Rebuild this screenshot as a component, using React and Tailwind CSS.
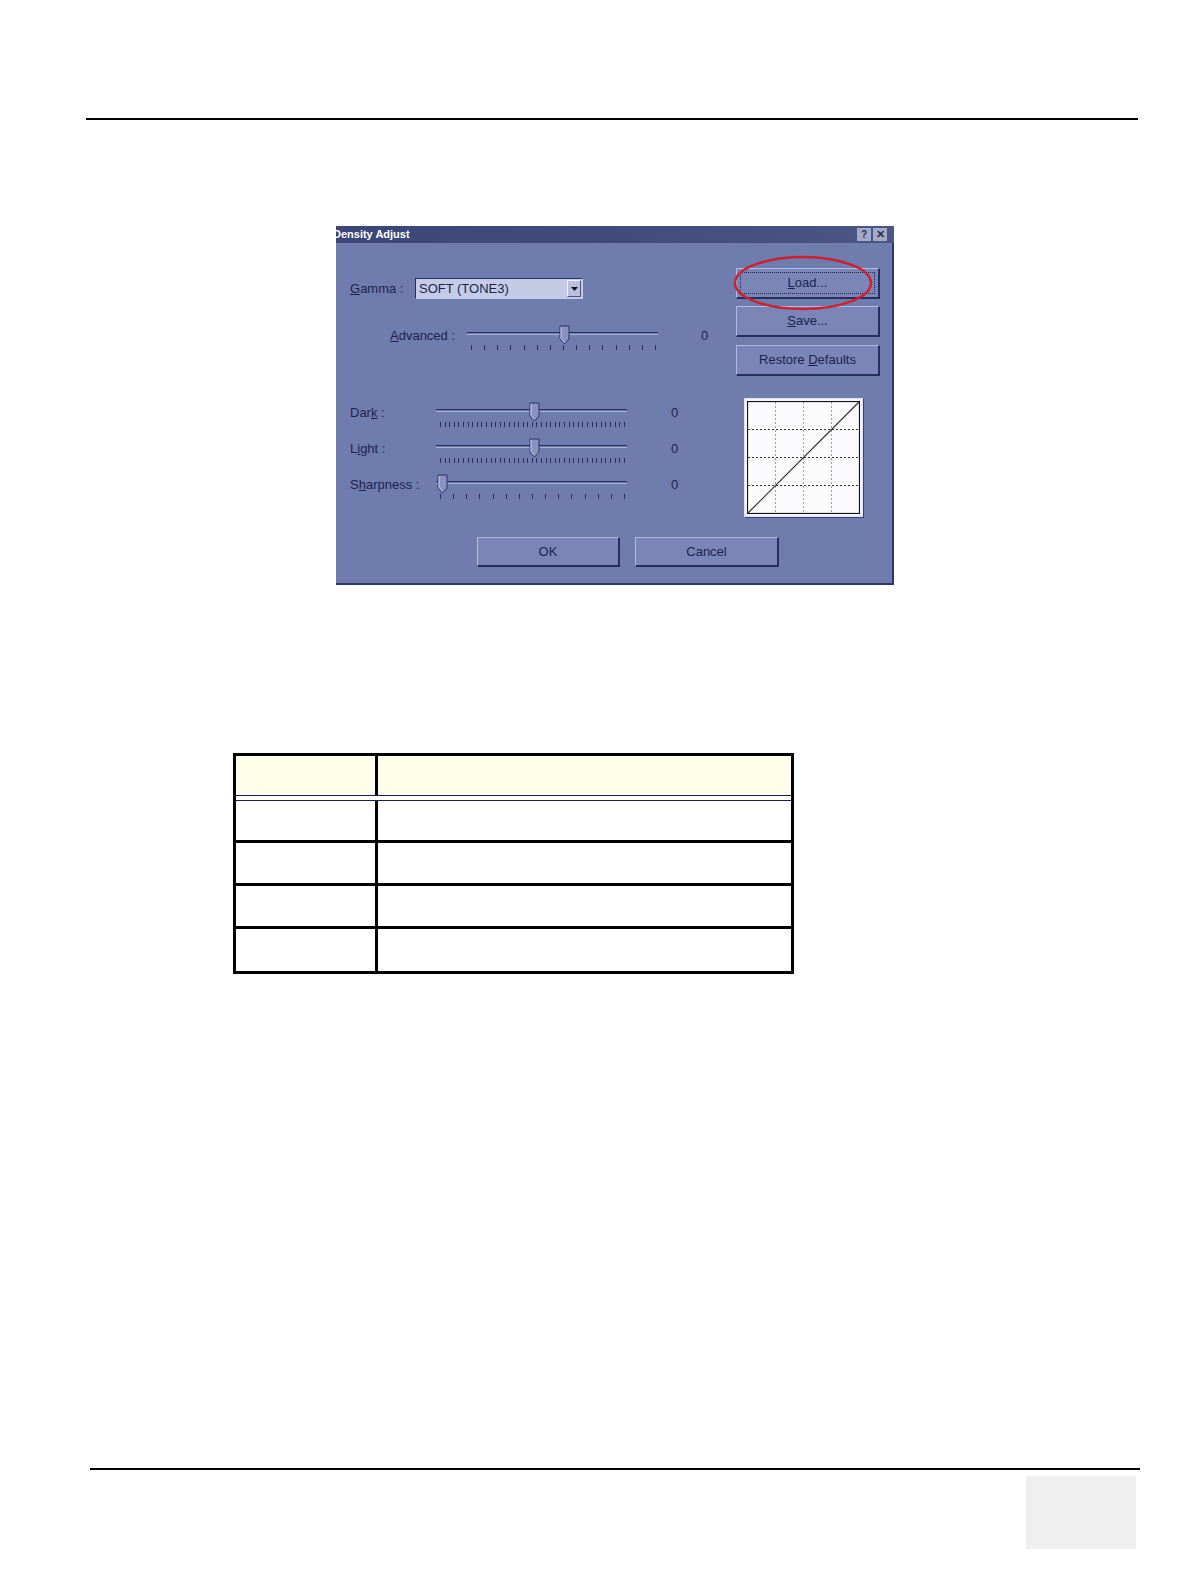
import React from 'react';

const ink = 'text-[#1c244e]';

function U({ children }) {
  return <span className="underline underline-offset-1">{children}</span>;
}

function Slider({ width, pos, ticks }) {
  const marks = Array.from({ length: ticks }, (_, i) => i);
  return (
    <div className="relative h-[26px]" style={{ width }}>
      <div className="absolute left-0 right-0 top-[9px] h-[3px] border-t border-[#27305e] border-b border-b-[#a7b0d8]" />
      <svg
        className="absolute top-[2px]"
        style={{ left: pos - 5 }}
        width="11"
        height="20"
        viewBox="0 0 11 20"
      >
        <path d="M1 1 H10 V14 L5.5 19 L1 14 Z" fill="#8893c2" stroke="#2b3566" strokeWidth="1" />
        <path d="M2 2 V13.5 L5.5 17.5" fill="none" stroke="#c5cbe8" strokeWidth="1" />
      </svg>
      <div className="absolute left-[4px] right-[2px] top-[22px] flex justify-between">
        {marks.map((i) => (
          <div key={i} className="h-[5px] w-px bg-[#27305e]" />
        ))}
      </div>
    </div>
  );
}

function WinButton({ children, focus, className = '' }) {
  return (
    <div
      className={`flex items-center justify-center border border-t-[#b2bade] border-l-[#b2bade] border-r-[#26305f] border-b-[#26305f] border-b-2 border-r-2 bg-[#7a86b8] text-[13px] ${ink} ${className}`}
    >
      <div className={`flex h-full w-full items-center justify-center ${focus ? 'outline outline-1 outline-dotted outline-[#1c244e] -outline-offset-4' : ''}`}>
        <span>{children}</span>
      </div>
    </div>
  );
}

function SliderRow({ label, labelW, slider, valueGap, className = '' }) {
  return (
    <div className={`flex items-center ${className}`}>
      <div className={`text-[13px] ${ink}`} style={{ width: labelW }}>{label}</div>
      {slider}
      <div className={`text-[13px] ${ink}`} style={{ marginLeft: valueGap }}>0</div>
    </div>
  );
}

function Curve() {
  return (
    <div className="h-[119px] w-[119px] border border-[#dfe3f3] bg-[#f4f5fb] p-[2px] shadow-[1px_1px_0_#3a4474]">
      <svg width="113" height="113" viewBox="0 0 113 113" className="block">
        <rect x="0.5" y="0.5" width="112" height="112" fill="#fbfbfd" stroke="#111" strokeWidth="1.2" />
        {[28.5, 56.5, 84.5].map((v) => (
          <g key={v}>
            <line x1={v} y1="1" x2={v} y2="112" stroke="#9a9aa6" strokeWidth="1" strokeDasharray="2 2" />
            <line x1="1" y1={v} x2="112" y2={v} stroke="#333" strokeWidth="1" strokeDasharray="2 2" />
          </g>
        ))}
        <line x1="1" y1="112" x2="112" y2="1" stroke="#333" strokeWidth="1.2" />
      </svg>
    </div>
  );
}

function Dialog() {
  return (
    <div className="relative h-[359px] w-[558px] overflow-hidden bg-[#6f7cae] shadow-[inset_-2px_-2px_0_#2d3768]">
      <div className="flex h-[17px] items-center justify-between bg-gradient-to-r from-[#3a4677] via-[#404c7e] to-[#4a5686] pr-[7px]">
        <div className="ml-[-3px] text-[11px] font-bold leading-none text-white">Density Adjust</div>
        <div className="flex gap-[2px]">
          <div className="flex h-[13px] w-[14px] items-center justify-center bg-[#a3aac8] text-[10px] font-bold leading-none text-[#2a3157]">?</div>
          <div className="flex h-[13px] w-[14px] items-center justify-center bg-[#a3aac8] text-[11px] font-bold leading-none text-[#2a3157]">✕</div>
        </div>
      </div>

      <div className="flex">
        <div className="w-[400px] pl-[14px]">
          <div className="mt-[35px] flex items-center">
            <div className={`w-[65px] text-[13px] ${ink}`}><U>G</U>amma :</div>
            <div className="flex h-[21px] w-[168px] items-center border border-t-[#27305e] border-l-[#27305e] border-r-[#c3c9e6] border-b-[#c3c9e6] bg-[#c6cbe5] pl-[3px] pr-[1px]">
              <div className="flex-1 text-[13px] leading-none text-[#1c244e]">SOFT (TONE3)</div>
              <div className="flex h-[17px] w-[14px] items-center justify-center border border-t-[#eef0fa] border-l-[#eef0fa] border-r-[#4a5383] border-b-[#4a5383] bg-[#b9bfdd]">
                <svg width="7" height="4" viewBox="0 0 7 4"><path d="M0 0 H7 L3.5 4 Z" fill="#111" /></svg>
              </div>
            </div>
          </div>

          <SliderRow
            className="mt-[24px] pl-[40px]"
            label={<><U>A</U>dvanced :</>}
            labelW={77}
            slider={<Slider width={191} pos={97} ticks={15} />}
            valueGap={43}
          />

          <SliderRow
            className="mt-[51px]"
            label={<>Dar<U>k</U> :</>}
            labelW={86}
            slider={<Slider width={191} pos={98} ticks={41} />}
            valueGap={44}
          />
          <SliderRow
            className="mt-[10px]"
            label={<>L<U>i</U>ght :</>}
            labelW={86}
            slider={<Slider width={191} pos={98} ticks={41} />}
            valueGap={44}
          />
          <SliderRow
            className="mt-[10px]"
            label={<>S<U>h</U>arpness :</>}
            labelW={86}
            slider={<Slider width={191} pos={6} ticks={15} />}
            valueGap={44}
          />
        </div>

        <div className="flex flex-col">
          <WinButton focus className="mt-[25px] h-[31px] w-[144px]"><U>L</U>oad...</WinButton>
          <WinButton className="mt-[7px] h-[31px] w-[144px]"><U>S</U>ave...</WinButton>
          <WinButton className="mt-[8px] h-[31px] w-[144px]">Restore <U>D</U>efaults</WinButton>
          <div className="mt-[22px] pl-[8px]"><Curve /></div>
        </div>
      </div>

      <div className="mt-[20px] flex gap-[15px] pl-[141px]">
        <WinButton className="h-[30px] w-[143px]">OK</WinButton>
        <WinButton className="h-[30px] w-[144px]">Cancel</WinButton>
      </div>

      <svg className="absolute left-[395px] top-[28px]" width="144" height="60" viewBox="0 0 144 60">
        <ellipse cx="72" cy="29" rx="68" ry="26" fill="none" stroke="#d0202c" strokeWidth="2.5" />
      </svg>
    </div>
  );
}

function Table() {
  const rows = [42, 43, 43, 42];
  return (
    <div className="w-[561px] border-[3px] border-black">
      <div className="grid h-[39px] grid-cols-[142px_1fr] bg-[#fffee8]">
        <div className="border-r-[3px] border-black" />
        <div />
      </div>
      <div className="h-[6px] border-y border-[#1a1a5c] bg-white" />
      {rows.map((h, r) => (
        <div
          key={r}
          className={`grid grid-cols-[142px_1fr] ${r < rows.length - 1 ? 'border-b-[3px] border-black' : ''}`}
          style={{ height: h }}
        >
          <div className="border-r-[3px] border-black" />
          <div />
        </div>
      ))}
    </div>
  );
}

export default function App() {
  return (
    <div className="flex h-[1584px] w-[1190px] flex-col bg-white font-['Liberation_Sans',Arial,sans-serif]">
      <div className="ml-[86px] mt-[118px] h-[2px] w-[1052px] bg-black" />
      <div className="ml-[336px] mt-[106px]"><Dialog /></div>
      <div className="ml-[233px] mt-[168px]"><Table /></div>
      <div className="ml-[90px] mt-[494px] h-[2px] w-[1050px] bg-black" />
      <div className="ml-[1026px] mt-[6px] h-[73px] w-[110px] bg-[#efefef]" />
    </div>
  );
}
